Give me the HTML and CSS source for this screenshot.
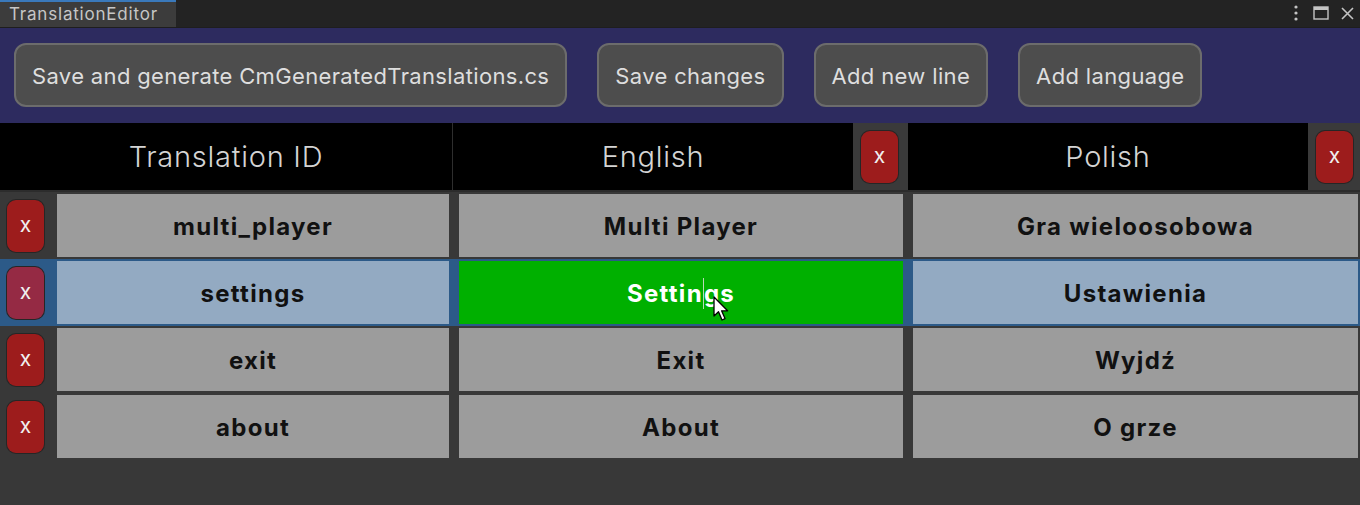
FILE: index.html
```html
<!DOCTYPE html>
<html>
<head>
<meta charset="utf-8">
<link rel="stylesheet" href="styles.css">
</head>
<body>
<div class="window">
  <div class="tabbar">
    <div class="tab">TranslationEditor</div>
    <div class="win-icons">
      <svg class="ico" width="10" height="18" viewBox="0 0 10 18"><circle cx="5" cy="3" r="1.6" fill="#c4c4c4"/><circle cx="5" cy="9" r="1.6" fill="#c4c4c4"/><circle cx="5" cy="15" r="1.6" fill="#c4c4c4"/></svg>
      <svg class="ico" width="16" height="14" viewBox="0 0 16 14"><rect x="1" y="1" width="14" height="12" fill="none" stroke="#c4c4c4" stroke-width="1.4"/><rect x="1" y="1" width="14" height="3" fill="#c4c4c4"/></svg>
      <svg class="ico" width="13" height="13" viewBox="0 0 13 13"><path d="M1 1 L12 12 M12 1 L1 12" stroke="#c4c4c4" stroke-width="1.6"/></svg>
    </div>
  </div>
  <div class="toolbar">
    <button class="tbtn">Save and generate CmGeneratedTranslations.cs</button>
    <button class="tbtn">Save changes</button>
    <button class="tbtn">Add new line</button>
    <button class="tbtn">Add language</button>
  </div>
  <div class="header">
    <div class="hcell hid">Translation ID</div>
    <div class="hsep"></div>
    <div class="hcell hlang">English</div>
    <div class="hx"><span class="xbtn">x</span></div>
    <div class="hcell hlang">Polish</div>
    <div class="hx hx-last"><span class="xbtn">x</span></div>
  </div>
  <div class="rows">
    <div class="row">
      <div class="xcol"><span class="xbtn">x</span></div>
      <div class="cell c1">multi_player</div>
      <div class="cell c2">Multi Player</div>
      <div class="cell c3">Gra wieloosobowa</div>
    </div>
    <div class="row selected">
      <div class="xcol"><span class="xbtn xbtn-sel">x</span></div>
      <div class="cell c1">settings</div>
      <div class="cell c2 editing">Settin<span class="caret"></span>gs
        <svg class="pointer" width="18" height="27" viewBox="0 0 18 27"><path d="M1 1 L1 20 L5.5 15.8 L9 24 L12 22.6 L8.6 14.8 L14.6 14.8 Z" fill="#fff" stroke="#000" stroke-width="1.3" stroke-linejoin="round"/></svg>
      </div>
      <div class="cell c3">Ustawienia</div>
    </div>
    <div class="row">
      <div class="xcol"><span class="xbtn">x</span></div>
      <div class="cell c1">exit</div>
      <div class="cell c2">Exit</div>
      <div class="cell c3">Wyjdź</div>
    </div>
    <div class="row">
      <div class="xcol"><span class="xbtn">x</span></div>
      <div class="cell c1">about</div>
      <div class="cell c2">About</div>
      <div class="cell c3">O grze</div>
    </div>
  </div>
</div>
</body>
</html>
```

FILE: styles.css
```css
* { box-sizing: border-box; }
html, body {
  margin: 0;
  padding: 0;
  background: #383838;
  font-family: Inter, "Noto Sans", "DejaVu Sans", sans-serif;
}
.window {
  width: 1360px;
  height: 505px;
  background: #383838;
  overflow: hidden;
}
.tabbar {
  height: 28px;
  background: #232323;
  display: flex;
  align-items: flex-start;
  justify-content: space-between;
  border-bottom: 1px solid #1e1e1e;
}
.tab {
  width: 176px;
  height: 27px;
  background: #3c3c3c;
  border-top: 2px solid #3a79bb;
  color: #c6c6c6;
  font-size: 17px;
  letter-spacing: 0.8px;
  line-height: 25px;
  padding-left: 9px;
}
.win-icons {
  display: flex;
  align-items: center;
  height: 26px;
  gap: 12px;
  padding-right: 6px;
}
.ico { display: block; }
.toolbar {
  height: 95px;
  background: #2d2b5f;
  display: flex;
  align-items: flex-start;
  padding: 15px 0 0 14px;
  gap: 30px;
}
.tbtn {
  height: 64px;
  background: #4d4d4d;
  border: 2px solid #6c6c6c;
  border-radius: 12px;
  color: #dedede;
  font-family: Inter, "Noto Sans", sans-serif;
  font-size: 22px;
  letter-spacing: 0.35px;
  padding: 2px 16px 0;
  margin: 0;
}
.header {
  height: 69px;
  background: #000;
  display: flex;
  border-bottom: 2px solid #2c2c2c;
}
.hcell {
  color: #d4d4d4;
  font-size: 29px;
  font-weight: 300;
  letter-spacing: 0.75px;
  display: flex;
  align-items: center;
  justify-content: center;
}
.hid { width: 452px; }
.hsep { width: 1px; background: #2e2e2e; }
.hlang { width: 400px; }
.hx {
  width: 55px;
  background: #3a3a3a;
  display: flex;
  align-items: center;
  padding-left: 8px;
}
.hx-last { width: 52px; }
.xbtn {
  width: 37px;
  height: 52px;
  border-radius: 9px;
  background: #9d1c1c;
  box-shadow: 0 0 0 1px #262626;
  color: #f0f0f0;
  font-size: 21px;
  display: flex;
  align-items: center;
  justify-content: center;
  padding-bottom: 2px;
}
.xbtn-sel { background: #952a44; }
.rows {
  display: flex;
  flex-direction: column;
}
.row {
  height: 67px;
  display: flex;
  padding: 2px 0;
}
.row.selected { background: #2c5a88; }
.xcol {
  width: 57px;
  display: flex;
  align-items: center;
  padding-left: 7px;
}
.cell {
  height: 63px;
  background: #9c9c9c;
  color: #111;
  font-size: 24px;
  font-weight: 700;
  letter-spacing: 1.3px;
  display: flex;
  align-items: center;
  justify-content: center;
  padding-top: 2px;
}
.c1 { width: 392px; }
.c2 { width: 444px; margin-left: 10px; }
.c3 { width: 445px; margin-left: 10px; }
.selected .cell { background: #93aac2; }
.selected .cell.editing {
  background: #00b000;
  color: #fff;
  position: relative;
}
.caret {
  display: inline-block;
  width: 1px;
  height: 31px;
  background: #b8d8b8;
  vertical-align: -8px;
}
.pointer {
  position: absolute;
  left: 254px;
  top: 35px;
}
```
